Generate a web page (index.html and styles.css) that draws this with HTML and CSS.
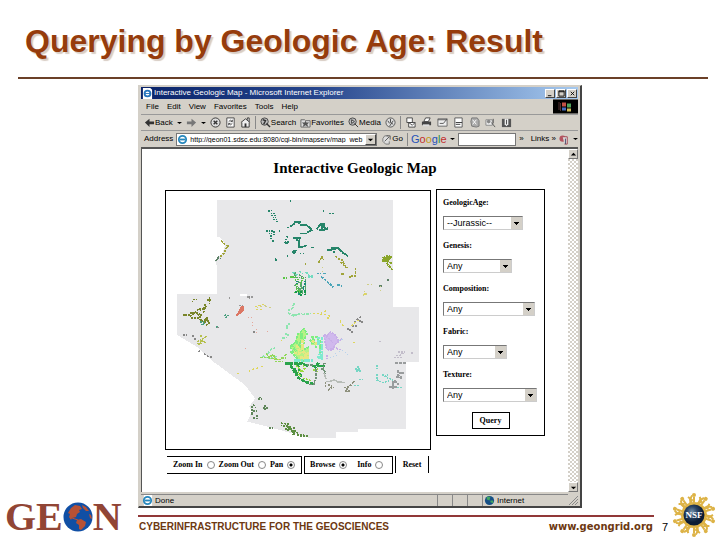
FILE: index.html
```html
<!DOCTYPE html>
<html lang="en">
<head>
<meta charset="utf-8">
<title>Querying by Geologic Age: Result</title>
<link rel="stylesheet" href="styles.css">
</head>
<body>
<header class="slide-head"><h1>Querying by Geologic Age: Result</h1></header>
<main class="stage">
  <section class="window">
    <div class="titlebar">
      <svg class="ico" viewBox="0 0 12 12"><path fill="#fff" d="M1 0h8l2 2v10H1z"/><circle cx="6" cy="6" r="3.2" fill="none" stroke="#2675bd" stroke-width="2"/><path stroke="#2675bd" d="M3 6h6"/></svg>
      <span class="caption">Interactive Geologic Map - Microsoft Internet Explorer</span>
      <button class="cap" aria-label="Minimize"><svg viewBox="0 0 8 8"><path d="M1 6.5h4" stroke="#000"/></svg></button>
      <button class="cap" aria-label="Maximize"><svg viewBox="0 0 8 8"><path d="M1 1h6v6H1zM1 2h6" stroke="#000" fill="none"/></svg></button>
      <button class="cap close" aria-label="Close"><svg viewBox="0 0 8 8"><path d="m2 2 4 4m0-4L2 6" stroke="#000" fill="none"/></svg></button>
    </div>
    <div class="menubar">
      <nav class="menus"><a href="#">File</a><a href="#">Edit</a><a href="#">View</a><a href="#">Favorites</a><a href="#">Tools</a><a href="#">Help</a></nav>
      <svg class="flag" viewBox="0 0 25 14"><path fill="#000" d="M0 0h25v14H0z"/><path fill="#c35145" d="M9 3h4v4H9z"/><path fill="#51a35b" d="M14 4h4v4h-4z"/><path fill="#456ec1" d="M9 8h4v3H9z"/><path fill="#d2bd59" d="M14 9h4v3h-4z"/><path stroke="#a66" stroke-dasharray="1 1" d="M6 3v8M7.500 4v7"/></svg>
    </div>
    <div class="toolbar">
      <button class="tool"><svg class="ico" viewBox="0 0 12 12"><path fill="#333" d="M1 6l5-4v3h5v3H6v3z"/></svg>Back</button>
      <svg class="tick" viewBox="0 0 5 4"><path d="M0 1h5L2.500 3z"/></svg>
      <svg class="ico" viewBox="0 0 12 12"><path fill="#777" d="M11 6 6 2v3H1v3h5v3z"/></svg>
      <svg class="tick" viewBox="0 0 5 4"><path d="M0 1h5L2.500 3z"/></svg>
      <svg class="ico" viewBox="0 0 12 12"><circle cx="6" cy="6" r="5" fill="#ddd" stroke="#333"/><path d="m4 4 4 4m0-4L4 8" stroke="#333" stroke-width="1.500"/></svg>
      <svg class="ico" viewBox="0 0 12 12"><path d="M2 1h8v10H2z" fill="#fff" stroke="#444"/><path d="M4 5q2-3 4 0M8 7q-2 3-4 0M8 3v2H6M4 9V7h2" fill="none" stroke="#444"/></svg>
      <svg class="ico" viewBox="0 0 12 12"><path d="m1 6 5-4 5 4M2 6v5h8V6M8 3V1h2v4" fill="#eee" stroke="#333"/><path fill="#333" d="M5 7h2v4H5z"/></svg>
      <span class="sep"></span>
      <button class="tool"><svg class="ico" viewBox="0 0 12 12"><circle cx="5" cy="5" r="4" fill="#bbb" stroke="#444"/><path d="m7 7 4 4M3 3l3 1-2 4" stroke="#333" fill="none" stroke-width="1.500"/></svg>Search</button>
      <button class="tool"><svg class="ico" viewBox="0 0 12 12"><path d="M1 3h4l1 1h5v7H1z" fill="#ddd" stroke="#666"/><path fill="#555" d="m6 4 1 2h3L8 8l1 3-3-2-3 2 1-3-2-2h3z"/></svg>Favorites</button>
      <button class="tool"><svg class="ico" viewBox="0 0 12 12"><circle cx="5" cy="5" r="4" fill="#bbb" stroke="#444"/><path d="m7 7 4 4M4 3v4l3-2z" stroke="#333" fill="#eee"/></svg>Media</button>
      <svg class="ico" viewBox="0 0 12 12"><circle cx="6" cy="6" r="5" fill="#ddd" stroke="#555"/><path d="M6 2v4l3 2M3 4l2 3M5 10l4-6" stroke="#444" fill="none"/></svg>
      <span class="sep"></span>
      <div class="extras">
      <svg class="ico" viewBox="0 0 12 12"><path d="M2 1h6v5H2zM4 6h7v5H4z" fill="#fff" stroke="#444"/><path d="m4 6 4 3 3-3" fill="none" stroke="#444"/></svg>
      <svg class="ico" viewBox="0 0 12 12"><path d="m3 5 2-4h5L8 5z" fill="#fff" stroke="#444"/><path d="M1 5h10v4H1z" fill="#444"/><path d="M2 8h7v2H2z" fill="#ddd"/></svg>
      <svg class="ico" viewBox="0 0 12 12"><path d="M1 2h10v8H1z" fill="#eee" stroke="#666"/><path d="M1 3h10M3 7h4l4-5" stroke="#555" fill="none"/></svg>
      <svg class="ico" viewBox="0 0 12 12"><path d="M2 1h8v10H2z" fill="#fff" stroke="#555"/><path d="M3 6h7M3 8h5" stroke="#333"/></svg>
      <svg class="ico" viewBox="0 0 12 12"><path d="M3 1h6l2 3v6l-3 1-5-1-1-5z" fill="#aaa" stroke="#777"/><path d="m4 3 4 5m0-5L4 8" stroke="#fff"/></svg>
      <svg class="ico" viewBox="0 0 12 12"><path d="M1 3h7v6H1z" fill="#eee" stroke="#888"/><circle cx="4" cy="5" r="2" fill="#888"/><path d="m7 6 4 5M9 2v5" stroke="#555"/></svg>
      <svg class="ico" viewBox="0 0 12 12"><path d="M1 2h10v9H1z" fill="#555"/><path d="M4 2h4v6l-2 2-2-2z" fill="#eee"/><path d="M6 3v5" stroke="#444"/></svg>
      </div>
    </div>
    <div class="addressbar">
      <label for="url">Address</label>
      <div class="urlbox"><svg class="ico" viewBox="0 0 12 12"><path fill="#fff" d="M1 0h10v12H1z"/><circle cx="6" cy="6" r="4" fill="none" stroke="#2687bd" stroke-width="2"/><path stroke="#2687bd" stroke-width="2" d="M3 6h6"/></svg><input id="url" value="http://geon01.sdsc.edu:8080/cgi-bin/mapserv/map_web"><button class="drop" aria-label="Show addresses"><svg viewBox="0 0 8 8"><path d="M1 3h6L4 6z"/></svg></button></div>
      <button class="tool go"><svg class="ico" viewBox="0 0 12 12"><path d="M8 2H4L2 5v3l3 3h4V8" fill="#ddd" stroke="#777"/><path d="m4 8 5-5M6 2h4v4" stroke="#555" fill="none"/></svg>Go</button>
      <span class="sep"></span>
      <span class="google"><b class="b">G</b><b class="r">o</b><b class="y">o</b><b class="b">g</b><b class="g">l</b><b class="r">e</b></span>
      <svg class="tick" viewBox="0 0 5 4"><path d="M0 1h5L2.500 3z"/></svg>
      <input class="gsearch" aria-label="Google search">
      <span class="more">»</span>
      <span class="links">Links »</span>
      <svg class="ico" viewBox="0 0 12 12"><circle cx="4" cy="5" r="3.500" fill="#b55460"/><path d="M4 3h5v8H6" fill="#ddd" stroke="#a04250"/><path d="M7 5v6" stroke="#446"/></svg>
      <svg class="tick" viewBox="0 0 5 4"><path d="M0 1h5L2.500 3z"/></svg>
    </div>
    <div class="viewport">
      <div class="page">
        <h2>Interactive Geologic Map</h2>
        <div class="columns">
          <div class="mapcol">
            <svg class="map" viewBox="18 123 792 774" role="img" aria-label="Geologic map" shape-rendering="crispEdges">
              <path fill="#e8e8ea" d="M171 150H698V471H777V635H738V836H595V846H528V863H445L330 832 262 815 275 785 268 770 285 745 255 705 160 635 110 590 51 555V432H171V348L165 330 180 315V262H171z"/>
              <path fill="#fff" d="M180 262l16 20-8 28-8 8zM240 431h22v6h-22z"/>
              <g fill="none" stroke-width="5">
                <g stroke="#26856a">
                  <path stroke-dasharray="5 3" d="M324 182h10l6-2M332 190h12m-10 6h14m-10 6h10m-8 6h10M318 242h20m-12 8h10m-4 6v12m10-24v12M336 272h6M348 214h6M390 152h4M488 182h6M508 190h14M358 240v8M382 258l-6 18h12"/>
                  <path d="M380 232h6M390 230l12-8 2-6h16l-4 6M408 217h10M420 224h18l10 8 8 8M420 250h20M440 248l18-8M470 238l6-8 6-8h10v10l12 6M476 240h16l12-6M486 226v16M400 264h20l-4 12v14h12l12-4M376 278h8M410 266v8M454 292h8M398 302h10l-6 8-6-6M502 300h12l2-6h18l10 10 20 14M514 296h14"/>
                  <path stroke-dasharray="4 5" d="M344 326h10m26-8h6m-38 10v6m72-24h12M534 296l16 14M522 304v8"/>
                </g>
                <g stroke="#a0a43b">
                  <path stroke-dasharray="7 3" d="M184 272l12 12 8 4-6 8-4 12-16 14M526 318l8 8 12 4 8 16 8 8M542 336l16 16M586 354v24h-16M568 382l8-4M544 372h12M476 338l10-18 4 10M434 342h4"/>
                </g>
                <path fill="#89a529" stroke="#89a529" stroke-dasharray="8 2" d="M668 324l14-6 14 2-12 12-14 2zM678 334l18 6M680 340l18 20"/>
                <path stroke="#5d8168" stroke-dasharray="7 3" d="M166 334l10-12 6 4M168 328h10M658 408h8M684 388v6"/>
                <g stroke="#55a66b" stroke-dasharray="5 2">
                  <path d="M404 366v16h16M418 374l12 10M408 394l14 6v26M404 404l16 18M424 382v34l14-12M436 380v54M414 414l16 12M422 436l6-10"/>
                  <path stroke="#59c646" d="M390 380h18m-4 12 14-6M410 400v18l12 14M420 400l10-16M402 428l18-8M370 384h14"/>
                  <path stroke="#168b78" d="M430 408v14m-14 8v6m18-44v12M410 392v10M424 432v6"/>
                </g>
                <path stroke="#70dbc0" stroke-dasharray="7 3" d="M398 366l14 10M418 364l10 6M438 366l12 14 12-4M444 380h14"/>
                <path stroke="#4ba5b8" stroke-dasharray="8 3" d="M470 370h12m8 0h10M484 380l12 10 16 14 8 8M532 404l14 4"/>
                <path stroke="#cfce86" stroke-width="3" stroke-dasharray="4 8" d="M614 422l-4 14 14-6M622 404h14m24 4v20M486 350v24M290 474l30-8M316 470l20 4"/>
                <path stroke="#999" stroke-dasharray="6 4" d="M262 440h16M208 442v8m60-8v6M236 466h14"/>
              </g>
              <g fill="none" stroke-width="5" transform="translate(0 420)">
                <g stroke="#79852a" stroke-dasharray="6 2">
                  <path d="M148 22v20m-8-12h16M134 42v14l-16 4M138 48l-8 20M100 28h10M96 34h4M110 60l24-6M68 74h20l8-10M90 78l20-14M94 84h24l8-14M114 72l10 20M124 94l20-8M92 68h24M138 84l10 14-12 10M134 98l8-16M118 70v20"/>
                  <path stroke="#b5c04f" d="M112 156l14-8 14-8M116 164l8-12 14 6M120 138h6M112 160h18"/>
                  <path stroke="#4ba080" d="M120 96h12M122 104l14-4M192 76h12l-8 8M196 72v12M168 110h8"/>
                </g>
                <path fill="#dc7764" stroke="#dc7764" d="M232 74l12-22 6-2-2 12-14 12z"/>
                <path stroke="#888" stroke-dasharray="6 4" d="M68 134h12m16 4h6m0 8h10M116 182l8 4M132 192l14 8h12M282 124v12M170 112h8m90-94v6M562 116h8v10h8M582 96l18-14v14h8M576 108h14M656 154h8"/>
                <path stroke="#e5a89b" stroke-width="3" stroke-dasharray="3 7" d="M264 82h22m-10 14v20m12 0v12m34-4v4M256 174v4"/>
                <path stroke="#8ee5b0" stroke-dasharray="8 4" d="M402 40l-4 14-14 8M384 68l16 10 12-4M400 76l26-6M426 74l28-4M380 104v12l8-16M374 132h12l-6 12M366 144h8M308 198l24 8 20-8M324 192l8-14 14-4"/>
                <path stroke="#dfd65d" stroke-width="4" stroke-dasharray="6 6" d="M458 70h26l14-8M480 74h16l20 6M500 84h14M540 92l10 16M574 108l16-16h10M362 154l8-8M578 158h12M284 50l30-8M288 58h20M266 244l16-8 14-2M304 230h10M232 250h4M612 12h8M330 198l20 12 18-6"/>
                <path fill="#b6f285" stroke="#79ed81" stroke-dasharray="8 3" d="M390 170l18-14 4-22 20-18 10 16-10 18-12 8 8 24 12-8 12-4 8-26 10 24-12 16-12 28h-30l-14-20z"/>
                <path stroke="#7fee80" stroke-width="7" stroke-dasharray="9 2" d="M392 184l14 14 12 12M408 154l14 20M424 128v24l10 8M454 140h20v26M480 150v46M448 150l16 10M394 164l14 20"/>
                <path stroke="#e6e781" stroke-width="8" stroke-dasharray="9 2" d="M428 150v32l10 12-8 16M456 152l18 12M444 186v22M420 202h20M402 188l22 4M410 166l12 24"/>
                <path stroke="#e8e8ea" stroke-width="16" d="M456 166v42"/>
                <path stroke="#80ead0" stroke-width="8" stroke-dasharray="8 2" d="M476 140v26M486 142v68M472 204l16-20M480 178v28M402 212h60"/>
                <path fill="#d0b9ed" stroke="#c8afe8" stroke-dasharray="7 2" d="M492 134h12l8-8 14 10 12 18-12 8-10 20-16-4-4-20z"/>
                <path stroke="#c8afe8" stroke-width="5" stroke-dasharray="6 3" d="M500 194v14M510 178l12-4M532 154l16-8M498 138l22 20M528 174l14 6"/>
                <path stroke="#b8d3ed" stroke-width="3" stroke-dasharray="4 6" d="M526 190l24-8 18 16M510 204l28-12M536 154l16-10"/>
                <path stroke="#91d75a" stroke-width="5" stroke-dasharray="8 3" d="M300 202h24l16-8 8 14h18l12-16M318 190l10 14 22 4M364 204h14M344 214h24"/>
                <path stroke="#2aa34b" stroke-width="8" stroke-dasharray="12 2" d="M374 220h50l20 8M392 226l8 14 10 16M402 234l14 30 20 12 26 6M412 220l8 24M404 244l22 14M456 228h38M476 218l-12 16"/>
                <path stroke="#9bda3e" stroke-width="5" stroke-dasharray="6 3" d="M408 226l18 20 12-14M414 244l8 18M430 264l22 8M458 240h12M472 234v12M430 224v14"/>
                <path stroke="#719177" stroke-width="5" stroke-dasharray="8 3" d="M440 224h18M468 238v26l-8 18M490 218v20l8 12M484 236h12M490 220h8M448 284l18-2"/>
                <path stroke="#b7bcb7" d="M492 248l6 20M498 274h12l14-4 10 6 22 2"/>
                <path stroke="#8d907c" stroke-width="5" stroke-dasharray="7 2" d="M496 276v18M504 284l12 4M510 292h12M504 300l12-8M552 292h10l12-8M560 294v12M554 302h18M576 280l10-6"/>
                <path stroke="#76d6c4" stroke-width="5" stroke-dasharray="6 3" d="M584 236h20M588 242h16M594 228v18M650 224v12M582 286h14M650 252v18l20 8 18-6M666 254l18 8M682 252v14M688 264l12 8M702 292h28M598 268h10"/>
                <path stroke="#999c9d" stroke-width="7" stroke-dasharray="10 2" d="M704 218h36M714 240v18l12 6M708 260h16M702 272l14 12M688 290h22M698 274v22M718 248h14"/>
                <path stroke="#c2bdca" stroke-width="5" stroke-dasharray="6 3" d="M708 196h12l10-8M714 186h22M702 202h24M752 188h8M656 154h10"/>
                <g stroke="#60875b" stroke-dasharray="6 3">
                  <path d="M294 326h12M298 322h8M276 348v28M280 344l8 8M310 354h14M314 346v16M278 362h12M272 372h8M280 384h4M290 374v12M326 414h14"/>
                  <path stroke="#5d8f42" d="M364 400h10l10 8M370 408h18l6 10M376 416h14l16 14M384 398v24M392 414l8 20M404 420l14 14M364 396v12M412 434h20M420 438h26M402 410v28"/>
                </g>
                <path stroke="#15944d" stroke-width="5" stroke-dasharray="8 3" d="M404 6h12M422 2v16M434 0v16"/>
              </g>
            </svg>
            <form class="controls">
              <div class="modes zoom"><label>Zoom In <input type="radio" name="mode"></label><label>Zoom Out <input type="radio" name="mode"></label><label>Pan <input type="radio" name="mode" checked></label></div>
              <div class="modes browse"><label>Browse <input type="radio" name="click" checked></label><label>Info <input type="radio" name="click"></label></div>
              <button type="reset" class="reset">Reset</button>
            </form>
          </div>
          <form class="query">
            <label for="age">GeologicAge:</label><select id="age" class="w-age"><option>--Jurassic--</option></select>
            <label for="gen">Genesis:</label><select id="gen" class="w-gen"><option>Any</option></select>
            <label for="comp">Composition:</label><select id="comp" class="w-comp"><option>Any</option></select>
            <label for="fab">Fabric:</label><select id="fab" class="w-fab"><option>Any</option></select>
            <label for="tex">Texture:</label><select id="tex" class="w-tex"><option>Any</option></select>
            <button type="button" class="submit">Query</button>
          </form>
        </div>
      </div>
      <div class="scrollbar"><button aria-label="Scroll up"><svg viewBox="0 0 8 8"><path d="M1 5h6L4 2z"/></svg></button><button aria-label="Scroll down"><svg viewBox="0 0 8 8"><path d="M1 3h6L4 6z"/></svg></button></div>
    </div>
    <div class="status">
      <div class="pane msg"><svg class="ico" viewBox="0 0 12 12"><path fill="#fff" d="M2 0h9v12H2z"/><circle cx="6" cy="6" r="4" fill="none" stroke="#2687bd" stroke-width="2"/><path stroke="#2687bd" stroke-width="2" d="M3 6h6"/></svg>Done</div>
      <div class="pane"></div><div class="pane"></div><div class="pane"></div>
      <div class="pane zone"><svg class="ico" viewBox="0 0 12 12"><circle cx="6" cy="6" r="5" fill="#164f86"/><path fill="#42a562" d="M3 2h4L6 6 3 5zM7 6h3v3L7 8z"/></svg>Internet</div>
      <svg class="grip" viewBox="0 0 10 10"><path d="M1 10l9-9M4 10l6-6M7 10l3-3" stroke="#888"/></svg>
    </div>
  </section>
  <div class="geon" aria-label="GEON">GE<svg viewBox="0 0 30 30"><circle cx="15" cy="15" r="14.500" fill="#104fa5"/><path fill="#b75135" d="M8 6l4-3 5 1 2 3-3 1 1 2-3 2-1 3-4 1-1 2-2-3 1-3-2-1zM19 3l4 2 3 4-3 0-3-3zM14 18l4-1 5 3-1 4-4 4-2-1v-4l-3-2zM26 12l2 1 1 4-2-1z"/><path stroke="#b75135" d="m9 16 3 1 3 1"/></svg>N</div>
  <footer class="foot"><span>CYBERINFRASTRUCTURE FOR THE GEOSCIENCES</span><a href="#">www.geongrid.org</a></footer>
  <div class="corner"><span class="num">7</span>
    <svg class="nsf" viewBox="-23 -23 46 46">
      <defs><radialGradient id="ball" cx=".4" cy=".35"><stop offset="0" stop-color="#7793ad"/><stop offset=".5" stop-color="#2b4667"/><stop offset="1" stop-color="#0b1c35"/></radialGradient>
      <g id="ray"><path d="M-4-11l2-4-4-3M4-11l2-4 4-2M0-11v-7" fill="none" stroke="#ddb347" stroke-width="2"/><circle cy="-20" r="2" fill="#ddb347"/></g></defs>
      <circle r="13" fill="#ddb347"/>
      <use href="#ray"/><use href="#ray" transform="rotate(36)"/><use href="#ray" transform="rotate(72)"/><use href="#ray" transform="rotate(108)"/><use href="#ray" transform="rotate(144)"/><use href="#ray" transform="rotate(180)"/><use href="#ray" transform="rotate(216)"/><use href="#ray" transform="rotate(252)"/><use href="#ray" transform="rotate(288)"/><use href="#ray" transform="rotate(324)"/>
      <circle r="10.500" fill="url(#ball)"/><text y="3" text-anchor="middle">NSF</text>
    </svg>
  </div>
</main>
</body>
</html>
```
FILE: styles.css
```css
* { box-sizing: border-box; }
body { margin: 0; background: #fff; color: #000; font-family: "Liberation Sans", Arial, sans-serif; }
button, input, select { font: inherit; color: inherit; margin: 0; padding: 0; border-radius: 0; }
button { border: 0; background: none; }
a { color: inherit; text-decoration: none; }
svg { display: block; flex: none; }

.slide-head { margin: 0 12px 0 18px; padding: 21px 7px 16px; border-bottom: 2px solid #6b4028; }
h1 { margin: 0; font-size: 32px; line-height: 40px; color: #963c0c; text-shadow: 2px 2px 1px #d8cdc4; white-space: nowrap; }

.stage { display: grid; grid-template-columns: 138px minmax(0, 1fr) 72px 66px; grid-template-rows: auto auto; padding-top: 6px; }
.window { grid-column: 2; grid-row: 1; background: #d4d0c8; border: 1px solid #d4d0c8; border-right: 2px solid #444; border-bottom: 2px solid #444; padding: 1px 2px 0; font-size: 8px; line-height: 10px; }
.ico { width: 11px; height: 11px; }

.titlebar { display: flex; align-items: center; height: 12px; gap: 1px; padding: 0 1px; color: #fff; background: linear-gradient(90deg, #0a246a, #26458c 40%, #a6caf0); }
.caption { flex: 1; white-space: nowrap; }
.cap { width: 10px; height: 9px; background: #d4d0c8; border: 1px solid; border-color: #fff #444 #444 #fff; }
.cap svg, .drop svg, .scrollbar svg { width: 7px; height: 7px; margin: auto; }

.menubar { display: flex; justify-content: space-between; height: 16px; border-bottom: 1px solid #999; }
.menus { display: flex; align-items: center; gap: 8px; padding-left: 5px; }
.flag { width: 25px; height: 15px; }

.toolbar { display: flex; align-items: center; gap: 4px; height: 16px; padding-left: 3px; border-bottom: 1px solid #999; }
.tool { display: flex; align-items: center; white-space: nowrap; }
.tick { width: 5px; height: 4px; }
.sep { width: 1px; height: 13px; background: #888; }
.extras { display: flex; gap: 5px; }

.addressbar { display: flex; align-items: center; gap: 3px; height: 16px; padding-left: 3px; }
.urlbox { display: flex; align-items: center; width: 201px; height: 13px; background: #fff; border: 1px solid #777; }
.urlbox input { flex: 1; min-width: 0; height: 11px; padding-left: 2px; border: 0; background: none; font-size: 7px; }
.drop { width: 11px; height: 11px; background: #d4d0c8; border: 1px solid; border-color: #fff #444 #444 #fff; }
.go { margin: 0 1px; }
.google { font-size: 11px; }
.google b { font-weight: normal; }
.b { color: #2550b8; } .r { color: #c32d2d; } .y { color: #c49a16; } .g { color: #2a913b; }
.gsearch { flex: 1; width: 0; min-width: 0; height: 13px; border: 1px solid #777; background: #fff; }
.links { padding-left: 4px; white-space: nowrap; }

.viewport { display: flex; border-top: 2px solid #555; border-left: 1px solid #555; background: #fff; }
.page { flex: 1; padding: 9px 23px 18px; font-family: "Liberation Serif", "Times New Roman", serif; font-weight: bold; }
h2 { margin: 0 0 11px; font-size: 15px; line-height: 20px; text-align: center; }
.columns { display: flex; align-items: flex-start; gap: 5px; }
.mapcol { flex: 1; }
.map { width: 100%; height: auto; border: 1px solid #000; margin-top: 1px; }
.controls { display: flex; gap: 2px; margin-top: 6px; padding: 0 2px; }
.modes { display: flex; align-items: center; height: 18px; border: 1px solid #000; }
.modes label { display: flex; align-items: center; gap: 4px; white-space: nowrap; }
.zoom { flex: 136; border-left: 0; padding-left: 6px; gap: 4px; }
.browse { flex: 87; padding-left: 5px; gap: 10px; }
.modes input { appearance: none; width: 8px; height: 8px; border: 1px solid #888; border-radius: 50%; background: #fff; }
.modes input:checked { background: radial-gradient(#000 0 1px, #fff 2px); }
.reset { flex: 34; border: solid #000; border-width: 0 1px; height: 17px; font-weight: bold; }

.query { display: flex; flex-direction: column; align-items: flex-start; width: 109px; padding: 7px 6px 6px; border: 1px solid #000; }
.query label { line-height: 12px; margin-bottom: 7px; }
.query select {
  appearance: none; height: 14px; margin-bottom: 10px; padding: 0 12px 0 3px;
  border: 1px solid; border-color: #777 #ccc #ccc #777;
  font: 9px/12px "Liberation Sans", Arial, sans-serif;
  background:
    linear-gradient(#000, #000) right 3px top 5px / 5px 1px no-repeat,
    linear-gradient(#000, #000) right 4px top 6px / 3px 1px no-repeat,
    linear-gradient(#000, #000) right 5px top 7px / 1px 1px no-repeat,
    linear-gradient(#d4d0c8, #d4d0c8) right / 11px 100% no-repeat #fff;
}
.query .w-age { width: 80px; } .query .w-gen { width: 69px; } .query .w-comp { width: 92px; } .query .w-fab { width: 64px; } .query .w-tex { width: 94px; }
.submit { align-self: center; width: 38px; height: 17px; border: 1px solid #000; }

.scrollbar { display: flex; flex-direction: column; justify-content: space-between; width: 10px; background: repeating-conic-gradient(#d4d0c8 0 25%, #fff 0 50%) 0 0 / 4px 4px; }
.scrollbar button { width: 10px; height: 10px; background: #d4d0c8; border: 1px solid; border-color: #fff #777 #777 #fff; }

.status { display: flex; align-items: center; height: 14px; padding-top: 2px; }
.pane { display: flex; align-items: center; gap: 2px; width: 15px; height: 12px; border-top: 1px solid #888; border-left: 1px solid #888; }
.msg { flex: 1; border-left: 0; padding-left: 1px; }
.zone { width: 86px; padding-left: 1px; }
.grip { width: 10px; height: 10px; }

.geon { grid-column: 1; grid-row: 1 / 3; align-self: end; display: flex; align-items: center; padding: 0 0 2px 5px; font: bold 40px/40px "Liberation Serif", serif; color: #914535; }
.geon svg { width: 30px; height: 30px; }
.foot { grid-column: 2 / 4; grid-row: 2; display: flex; justify-content: space-between; align-items: center; margin-top: 7px; height: 24px; padding: 0 1px 4px; border-top: 2px solid #913838; color: #6d3811; font-size: 10px; font-weight: bold; white-space: nowrap; }
.foot a { font: bold 10px "DejaVu Sans", Verdana, sans-serif; }
.corner { grid-column: 4; grid-row: 1 / 3; align-self: end; display: flex; align-items: flex-end; gap: 3px; padding: 0 0 1px 8px; font-size: 11px; }
.num { padding-bottom: 5px; }
.nsf { width: 46px; height: 46px; }
.nsf text { font: bold 9px "Liberation Serif", serif; fill: #fff; }
```
